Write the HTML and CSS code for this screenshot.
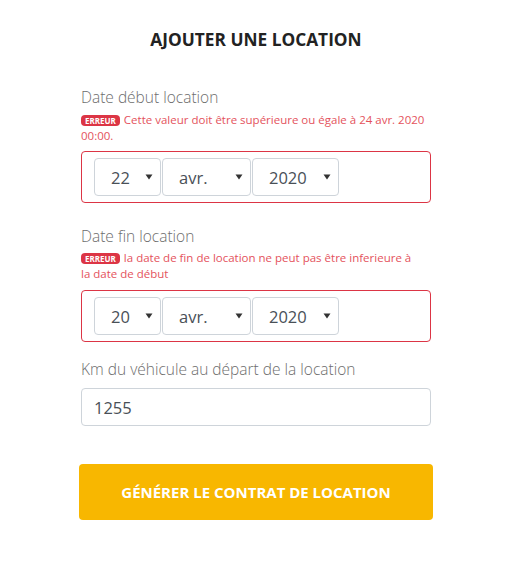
FILE: index.html
```html
<!DOCTYPE html>
<html lang="fr">
<head>
<meta charset="utf-8">
<title>Ajouter une location</title>
<link rel="stylesheet" href="styles.css">
</head>
<body>
<main class="page">
  <h1 class="title">AJOUTER UNE LOCATION</h1>

  <section class="field field--invalid">
    <div class="label">Date début location</div>
    <div class="error"><span class="badge">ERREUR</span>Cette valeur doit être supérieure ou égale à 24 avr. 2020<br>00:00.</div>
    <div class="date-box">
      <div class="select sel-day"><span>22</span><svg class="arrow" viewBox="0 0 8 6" width="8" height="6"><path d="M0.5 0.5H7.5L4 5.5Z"/></svg></div>
      <div class="select sel-month"><span>avr.</span><svg class="arrow" viewBox="0 0 8 6" width="8" height="6"><path d="M0.5 0.5H7.5L4 5.5Z"/></svg></div>
      <div class="select sel-year"><span>2020</span><svg class="arrow" viewBox="0 0 8 6" width="8" height="6"><path d="M0.5 0.5H7.5L4 5.5Z"/></svg></div>
    </div>
  </section>

  <section class="field field--invalid field--second">
    <div class="label">Date fin location</div>
    <div class="error"><span class="badge">ERREUR</span>la date de fin de location ne peut pas être inferieure à<br>la date de début</div>
    <div class="date-box">
      <div class="select sel-day"><span>20</span><svg class="arrow" viewBox="0 0 8 6" width="8" height="6"><path d="M0.5 0.5H7.5L4 5.5Z"/></svg></div>
      <div class="select sel-month"><span>avr.</span><svg class="arrow" viewBox="0 0 8 6" width="8" height="6"><path d="M0.5 0.5H7.5L4 5.5Z"/></svg></div>
      <div class="select sel-year"><span>2020</span><svg class="arrow" viewBox="0 0 8 6" width="8" height="6"><path d="M0.5 0.5H7.5L4 5.5Z"/></svg></div>
    </div>
  </section>

  <section class="field field--km">
    <div class="label label--km">Km du véhicule au départ de la location</div>
    <div class="input">1255</div>
  </section>

  <button class="submit" type="button">GÉNÉRER LE CONTRAT DE LOCATION</button>
</main>
</body>
</html>
```

FILE: styles.css
```css
html, body {
  margin: 0;
  padding: 0;
  background: #ffffff;
}

body {
  font-family: "Open Sans", "Noto Sans", sans-serif;
  color: #333;
}

.page {
  width: 350px;
  margin-left: 81px;
  padding-top: 28px;
}

.title {
  margin: 0 0 35px 0;
  font-family: "Open Sans", sans-serif;
  font-weight: 700;
  font-size: 17.3px;
  line-height: 24px;
  color: #222;
  text-align: center;
}

.label {
  font-family: "Open Sans", sans-serif;
  font-weight: 300;
  font-size: 15.5px;
  line-height: 20px;
  color: #6d6d6d;
  margin-bottom: 5px;
}

.error {
  font-family: "Open Sans", sans-serif;
  font-weight: 400;
  font-size: 11.5px;
  line-height: 16px;
  color: #e4525c;
  margin-bottom: 7px;
  white-space: nowrap;
}

.badge {
  display: inline-block;
  background: #dc3545;
  color: #fff;
  font-weight: 700;
  font-size: 8px;
  line-height: 11px;
  height: 11px;
  padding: 0 4px;
  margin-right: 4px;
  border-radius: 4px;
  vertical-align: 0;
}

.date-box {
  border: 1px solid #dc3545;
  border-radius: 4px;
  padding: 6px 12px;
  display: flex;
  gap: 1px;
}

.select {
  box-sizing: border-box;
  height: 38px;
  border: 1px solid #ced4da;
  border-radius: 4px;
  display: flex;
  align-items: center;
  padding: 0 7px 0 16px;
  font-size: 16.5px;
  color: #495057;
}

.select .arrow {
  margin-left: auto;
  fill: #333;
}

.sel-day { width: 67px; }
.sel-month { width: 89px; }
.sel-year { width: 87px; }

.field--invalid { margin-bottom: 23px; }
.field--second .label { margin-bottom: 4px; }
.field--second .error { margin-bottom: 8px; }
.field--second { margin-bottom: 17px; }

.label--km { margin-bottom: 9px; }

.input {
  box-sizing: border-box;
  height: 38px;
  border: 1px solid #ced4da;
  border-radius: 4px;
  padding: 0 12px;
  display: flex;
  align-items: center;
  font-size: 16.5px;
  color: #495057;
}

.submit {
  display: block;
  box-sizing: border-box;
  width: 354px;
  height: 56px;
  margin: 38px -2px 0 -2px;
  border: none;
  border-radius: 4px;
  background: #f8b700;
  color: #fff;
  font-family: "Open Sans", sans-serif;
  font-weight: 700;
  font-size: 15px;
  cursor: pointer;
}
```
